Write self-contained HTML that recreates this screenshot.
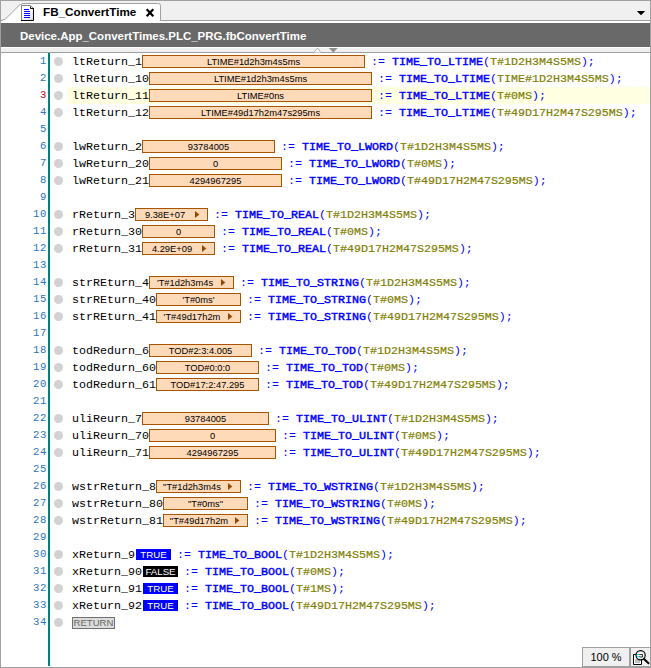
<!DOCTYPE html>
<html><head><meta charset="utf-8"><title>FB_ConvertTime</title>
<style>
html,body{margin:0;padding:0}
body{width:651px;height:668px;position:relative;overflow:hidden;background:#fff;font-family:"Liberation Sans",sans-serif}
div{position:absolute;box-sizing:border-box;white-space:pre}
#frame{left:0;top:0;width:651px;height:668px;border:1px solid #a0a0a0;z-index:20;pointer-events:none}
#tabbar{left:0;top:0;width:651px;height:21px;background:#f0f0f0;border-bottom:1px solid #a0a0a0}
#tabtitle{left:43px;top:4px;font-weight:bold;font-size:11.7px;line-height:15px;color:#000}
#band{left:1px;top:23px;width:649px;height:24px;background:#696969}
#bandtxt{left:20px;top:29px;font-weight:bold;font-size:11.47px;line-height:15px;color:#fff}
#strip{left:1px;top:47px;width:649px;height:6px;background:#f0f0f0;border-top:1px solid #fff;border-bottom:1px solid #a0a0a0}
#teal{left:48px;top:53px;width:2px;height:613px;background:#008080}
.ln{left:0;width:47px;height:17px;text-align:right;font-family:"Liberation Mono",monospace;font-size:10.6px;letter-spacing:0.64px;line-height:16px;color:#2b74bc}
.ln.cur{color:#c4001c}
.bp{left:54px;width:9px;height:9px;border-radius:50%;background:#d2d2d2}
.hl{left:67px;width:583px;height:17px;background:#ffffe1}
.c{font-family:"Liberation Mono",monospace;font-size:11.667px;letter-spacing:0;line-height:17px;height:17px;color:#000}
.k{color:#0000ff}
.k b{font-weight:normal;color:#808000;-webkit-text-stroke:0.2px #808000}
.k u{text-decoration:none;font-weight:normal;-webkit-text-stroke:0.45px #0000ff}
.v{height:13px;border:1px solid #a85400;background:#ffdab9;font-size:9.33px;line-height:11px;text-align:center;color:#000}
.v span{position:relative;top:0.7px}
.v.a{padding-right:13px}
.v svg{position:absolute;right:7px;top:1px}
.b{width:35px;height:11px;font-size:9.7px;line-height:11px;text-align:center;color:#fff}
.b.t{background:#0000ff}
.b.f{background:#000}
.ret{left:72px;width:43px;height:12px;border:1px solid #707070;background:#dcdcdc;color:#686868;font-size:9.6px;line-height:10.500px;text-align:center}
#zoom{left:582px;top:647px;width:47px;height:20px;background:#f0f0f0;border-left:1px solid #a0a0a0;border-top:1px solid #a0a0a0;border-bottom:1px solid #a0a0a0;font-size:11px;line-height:18px;text-align:center;color:#000}
#zicon{left:629px;top:647px;width:21px;height:20px;background:#f0f0f0;border-left:2px solid #a0a0a0;border-top:1px solid #a0a0a0;border-bottom:1px solid #a0a0a0}
</style></head><body>
<div id="tabbar"></div>
<svg id="tabsvg" style="position:absolute;left:0;top:0" width="200" height="24" viewBox="0 0 200 24">
<path d="M1.5 23 L1.5 20.5 L5 19.5 L19.5 5 L23 3.5 L158.5 3.5 Q160.5 3.5 160.5 5.5 L160.5 23 Z" fill="#fff" stroke="none"/>
<path d="M1 20.5 L5 19.5 L19.5 5 L23 3.5 L158.5 3.5 Q160.5 3.5 160.5 5.5 L160.5 20.5" fill="none" stroke="#a0a0a0" stroke-width="1"/>
<g>
<defs><linearGradient id="pg" x1="0" y1="0" x2="1" y2="1"><stop offset="0.45" stop-color="#fff"/><stop offset="1" stop-color="#dcdcdc"/></linearGradient></defs>
<path d="M22 6 H30.500 L33 8.500 V20 H22 Z" fill="url(#pg)"/>
<path d="M21.500 20 V5.500 H30.500 L33.300 8.300" fill="none" stroke="#808080" stroke-width="1"/>
<path d="M30.500 6.500 V8.500 H33.500 M33.500 8 V20.500 H21 " fill="none" stroke="#000" stroke-width="1"/>
<path d="M24 9.500H29M24 11.500H30M24 13.500H30M24 15.500H30M24 17.500H30" stroke="#0000ff" stroke-width="1"/>
</g>
<path d="M146.700 9.200 L153.300 16.300 M153.300 9.200 L146.700 16.300" stroke="#000" stroke-width="2.200"/>
</svg>
<div id="tabwhite" style="left:1px;top:21px;width:649px;height:2px;background:#fff"></div>
<div id="tabtitle">FB_ConvertTime</div>
<svg style="position:absolute;left:636px;top:10px" width="10" height="6" viewBox="0 0 10 6"><path d="M0.800 1 H9.200 L5 5.200 Z" fill="#000"/></svg>
<div id="band"></div>
<div id="bandtxt">Device.App_ConvertTimes.PLC_PRG.fbConvertTime</div>
<div id="strip"></div>
<div id="teal"></div>
<svg style="position:absolute;left:312px;top:47px" width="28" height="6" viewBox="0 0 28 6">
<path d="M2 5.500 L5.500 1 L9 5.500" fill="#fff" stroke="#a0a0a0" stroke-width="0.800"/>
<path d="M16.800 1 H25.700 L21.300 5.500 Z" fill="#909090"/>
</svg>
<div class="ln" style="top:53px">1</div>
<div class="bp" style="top:57px"></div>
<div class="c" style="top:54px;left:72px">ltReturn_1</div>
<div class="v" style="top:55px;left:142px;width:223px"><span>LTIME#1d2h3m4s5ms</span></div>
<div class="c k" style="top:54px;left:371px">:= <u>TIME_TO_LTIME</u>(<b>T#1D2H3M4S5MS</b>);</div>
<div class="ln" style="top:70px">2</div>
<div class="bp" style="top:74px"></div>
<div class="c" style="top:71px;left:72px">ltReturn_10</div>
<div class="v" style="top:72px;left:149px;width:223px"><span>LTIME#1d2h3m4s5ms</span></div>
<div class="c k" style="top:71px;left:378px">:= <u>TIME_TO_LTIME</u>(<b>TIME#1D2H3M4S5MS</b>);</div>
<div class="ln cur" style="top:87px">3</div>
<div class="bp" style="top:91px"></div>
<div class="hl" style="top:87px"></div>
<div class="c" style="top:88px;left:72px">ltReturn_11</div>
<div class="v" style="top:89px;left:149px;width:223px"><span>LTIME#0ns</span></div>
<div class="c k" style="top:88px;left:378px">:= <u>TIME_TO_LTIME</u>(<b>T#0MS</b>);</div>
<div class="ln" style="top:104px">4</div>
<div class="bp" style="top:108px"></div>
<div class="c" style="top:105px;left:72px">ltReturn_12</div>
<div class="v" style="top:106px;left:149px;width:223px"><span>LTIME#49d17h2m47s295ms</span></div>
<div class="c k" style="top:105px;left:378px">:= <u>TIME_TO_LTIME</u>(<b>T#49D17H2M47S295MS</b>);</div>
<div class="ln" style="top:121px">5</div>
<div class="ln" style="top:138px">6</div>
<div class="bp" style="top:142px"></div>
<div class="c" style="top:139px;left:72px">lwReturn_2</div>
<div class="v" style="top:140px;left:142px;width:133px"><span>93784005</span></div>
<div class="c k" style="top:139px;left:281px">:= <u>TIME_TO_LWORD</u>(<b>T#1D2H3M4S5MS</b>);</div>
<div class="ln" style="top:155px">7</div>
<div class="bp" style="top:159px"></div>
<div class="c" style="top:156px;left:72px">lwReturn_20</div>
<div class="v" style="top:157px;left:149px;width:133px"><span>0</span></div>
<div class="c k" style="top:156px;left:288px">:= <u>TIME_TO_LWORD</u>(<b>T#0MS</b>);</div>
<div class="ln" style="top:172px">8</div>
<div class="bp" style="top:176px"></div>
<div class="c" style="top:173px;left:72px">lwReturn_21</div>
<div class="v" style="top:174px;left:149px;width:133px"><span>4294967295</span></div>
<div class="c k" style="top:173px;left:288px">:= <u>TIME_TO_LWORD</u>(<b>T#49D17H2M47S295MS</b>);</div>
<div class="ln" style="top:189px">9</div>
<div class="ln" style="top:206px">10</div>
<div class="bp" style="top:210px"></div>
<div class="c" style="top:207px;left:72px">rReturn_3</div>
<div class="v a" style="top:208px;left:135px;width:73px"><span>9.38E+07</span><svg width="6" height="9" viewBox="0 0 6 9"><path d="M1 0.900 L5.300 4.500 L1 8.100 Z" fill="#964600"/></svg></div>
<div class="c k" style="top:207px;left:214px">:= <u>TIME_TO_REAL</u>(<b>T#1D2H3M4S5MS</b>);</div>
<div class="ln" style="top:223px">11</div>
<div class="bp" style="top:227px"></div>
<div class="c" style="top:224px;left:72px">rReturn_30</div>
<div class="v" style="top:225px;left:142px;width:73px"><span>0</span></div>
<div class="c k" style="top:224px;left:221px">:= <u>TIME_TO_REAL</u>(<b>T#0MS</b>);</div>
<div class="ln" style="top:240px">12</div>
<div class="bp" style="top:244px"></div>
<div class="c" style="top:241px;left:72px">rReturn_31</div>
<div class="v a" style="top:242px;left:142px;width:73px"><span>4.29E+09</span><svg width="6" height="9" viewBox="0 0 6 9"><path d="M1 0.900 L5.300 4.500 L1 8.100 Z" fill="#964600"/></svg></div>
<div class="c k" style="top:241px;left:221px">:= <u>TIME_TO_REAL</u>(<b>T#49D17H2M47S295MS</b>);</div>
<div class="ln" style="top:257px">13</div>
<div class="ln" style="top:274px">14</div>
<div class="bp" style="top:278px"></div>
<div class="c" style="top:275px;left:72px">strREturn_4</div>
<div class="v a" style="top:276px;left:149px;width:85px"><span>'T#1d2h3m4s</span><svg width="6" height="9" viewBox="0 0 6 9"><path d="M1 0.900 L5.300 4.500 L1 8.100 Z" fill="#964600"/></svg></div>
<div class="c k" style="top:275px;left:240px">:= <u>TIME_TO_STRING</u>(<b>T#1D2H3M4S5MS</b>);</div>
<div class="ln" style="top:291px">15</div>
<div class="bp" style="top:295px"></div>
<div class="c" style="top:292px;left:72px">strREturn_40</div>
<div class="v" style="top:293px;left:156px;width:85px"><span>'T#0ms'</span></div>
<div class="c k" style="top:292px;left:247px">:= <u>TIME_TO_STRING</u>(<b>T#0MS</b>);</div>
<div class="ln" style="top:308px">16</div>
<div class="bp" style="top:312px"></div>
<div class="c" style="top:309px;left:72px">strREturn_41</div>
<div class="v a" style="top:310px;left:156px;width:85px"><span>'T#49d17h2m</span><svg width="6" height="9" viewBox="0 0 6 9"><path d="M1 0.900 L5.300 4.500 L1 8.100 Z" fill="#964600"/></svg></div>
<div class="c k" style="top:309px;left:247px">:= <u>TIME_TO_STRING</u>(<b>T#49D17H2M47S295MS</b>);</div>
<div class="ln" style="top:325px">17</div>
<div class="ln" style="top:342px">18</div>
<div class="bp" style="top:346px"></div>
<div class="c" style="top:343px;left:72px">todRedurn_6</div>
<div class="v" style="top:344px;left:149px;width:103px"><span>TOD#2:3:4.005</span></div>
<div class="c k" style="top:343px;left:258px">:= <u>TIME_TO_TOD</u>(<b>T#1D2H3M4S5MS</b>);</div>
<div class="ln" style="top:359px">19</div>
<div class="bp" style="top:363px"></div>
<div class="c" style="top:360px;left:72px">todRedurn_60</div>
<div class="v" style="top:361px;left:156px;width:103px"><span>TOD#0:0:0</span></div>
<div class="c k" style="top:360px;left:265px">:= <u>TIME_TO_TOD</u>(<b>T#0MS</b>);</div>
<div class="ln" style="top:376px">20</div>
<div class="bp" style="top:380px"></div>
<div class="c" style="top:377px;left:72px">todRedurn_61</div>
<div class="v" style="top:378px;left:156px;width:103px"><span>TOD#17:2:47.295</span></div>
<div class="c k" style="top:377px;left:265px">:= <u>TIME_TO_TOD</u>(<b>T#49D17H2M47S295MS</b>);</div>
<div class="ln" style="top:393px">21</div>
<div class="ln" style="top:410px">22</div>
<div class="bp" style="top:414px"></div>
<div class="c" style="top:411px;left:72px">uliReurn_7</div>
<div class="v" style="top:412px;left:142px;width:127px"><span>93784005</span></div>
<div class="c k" style="top:411px;left:275px">:= <u>TIME_TO_ULINT</u>(<b>T#1D2H3M4S5MS</b>);</div>
<div class="ln" style="top:427px">23</div>
<div class="bp" style="top:431px"></div>
<div class="c" style="top:428px;left:72px">uliReurn_70</div>
<div class="v" style="top:429px;left:149px;width:127px"><span>0</span></div>
<div class="c k" style="top:428px;left:282px">:= <u>TIME_TO_ULINT</u>(<b>T#0MS</b>);</div>
<div class="ln" style="top:444px">24</div>
<div class="bp" style="top:448px"></div>
<div class="c" style="top:445px;left:72px">uliReurn_71</div>
<div class="v" style="top:446px;left:149px;width:127px"><span>4294967295</span></div>
<div class="c k" style="top:445px;left:282px">:= <u>TIME_TO_ULINT</u>(<b>T#49D17H2M47S295MS</b>);</div>
<div class="ln" style="top:461px">25</div>
<div class="ln" style="top:478px">26</div>
<div class="bp" style="top:482px"></div>
<div class="c" style="top:479px;left:72px">wstrReturn_8</div>
<div class="v a" style="top:480px;left:156px;width:85px"><span>"T#1d2h3m4s</span><svg width="6" height="9" viewBox="0 0 6 9"><path d="M1 0.900 L5.300 4.500 L1 8.100 Z" fill="#964600"/></svg></div>
<div class="c k" style="top:479px;left:247px">:= <u>TIME_TO_WSTRING</u>(<b>T#1D2H3M4S5MS</b>);</div>
<div class="ln" style="top:495px">27</div>
<div class="bp" style="top:499px"></div>
<div class="c" style="top:496px;left:72px">wstrReturn_80</div>
<div class="v" style="top:497px;left:163px;width:85px"><span>"T#0ms"</span></div>
<div class="c k" style="top:496px;left:254px">:= <u>TIME_TO_WSTRING</u>(<b>T#0MS</b>);</div>
<div class="ln" style="top:512px">28</div>
<div class="bp" style="top:516px"></div>
<div class="c" style="top:513px;left:72px">wstrReturn_81</div>
<div class="v a" style="top:514px;left:163px;width:85px"><span>"T#49d17h2m</span><svg width="6" height="9" viewBox="0 0 6 9"><path d="M1 0.900 L5.300 4.500 L1 8.100 Z" fill="#964600"/></svg></div>
<div class="c k" style="top:513px;left:254px">:= <u>TIME_TO_WSTRING</u>(<b>T#49D17H2M47S295MS</b>);</div>
<div class="ln" style="top:529px">29</div>
<div class="ln" style="top:546px">30</div>
<div class="bp" style="top:550px"></div>
<div class="c" style="top:547px;left:72px">xReturn_9</div>
<div class="b t" style="top:549px;left:136px">TRUE</div>
<div class="c k" style="top:547px;left:177px">:= <u>TIME_TO_BOOL</u>(<b>T#1D2H3M4S5MS</b>);</div>
<div class="ln" style="top:563px">31</div>
<div class="bp" style="top:567px"></div>
<div class="c" style="top:564px;left:72px">xReturn_90</div>
<div class="b f" style="top:566px;left:143px">FALSE</div>
<div class="c k" style="top:564px;left:184px">:= <u>TIME_TO_BOOL</u>(<b>T#0MS</b>);</div>
<div class="ln" style="top:580px">32</div>
<div class="bp" style="top:584px"></div>
<div class="c" style="top:581px;left:72px">xReturn_91</div>
<div class="b t" style="top:583px;left:143px">TRUE</div>
<div class="c k" style="top:581px;left:184px">:= <u>TIME_TO_BOOL</u>(<b>T#1MS</b>);</div>
<div class="ln" style="top:597px">33</div>
<div class="bp" style="top:601px"></div>
<div class="c" style="top:598px;left:72px">xReturn_92</div>
<div class="b t" style="top:600px;left:143px">TRUE</div>
<div class="c k" style="top:598px;left:184px">:= <u>TIME_TO_BOOL</u>(<b>T#49D17H2M47S295MS</b>);</div>
<div class="ln" style="top:614px">34</div>
<div class="bp" style="top:618px"></div>
<div class="ret" style="top:617px">RETURN</div>
<div id="zoom">100 %</div>
<div id="zicon"></div>
<svg style="position:absolute;left:631px;top:648px" width="19" height="18" viewBox="0 0 19 18">
<path d="M2.500 6.500 H8 L10.500 9 V16.500 H2.500 Z" fill="#fff" stroke="#000" stroke-width="1"/>
<path d="M4 11 H9 V15 H4 Z" fill="#c0c0c0"/>
<circle cx="9.600" cy="7.300" r="4.600" fill="#f4f4f4" stroke="#000" stroke-width="1.200"/>
<path d="M6 6.500 H9 M6.500 8.500 H9" stroke="#00e0e0" stroke-width="1"/>
<path d="M8.500 6.500 H11.500 V9 H8.500" fill="none" stroke="#000" stroke-width="0.800"/>
<path d="M13 11 L17.500 15.300" stroke="#000" stroke-width="2" stroke-linecap="round"/>
</svg>
<div id="frame"></div>
</body></html>
